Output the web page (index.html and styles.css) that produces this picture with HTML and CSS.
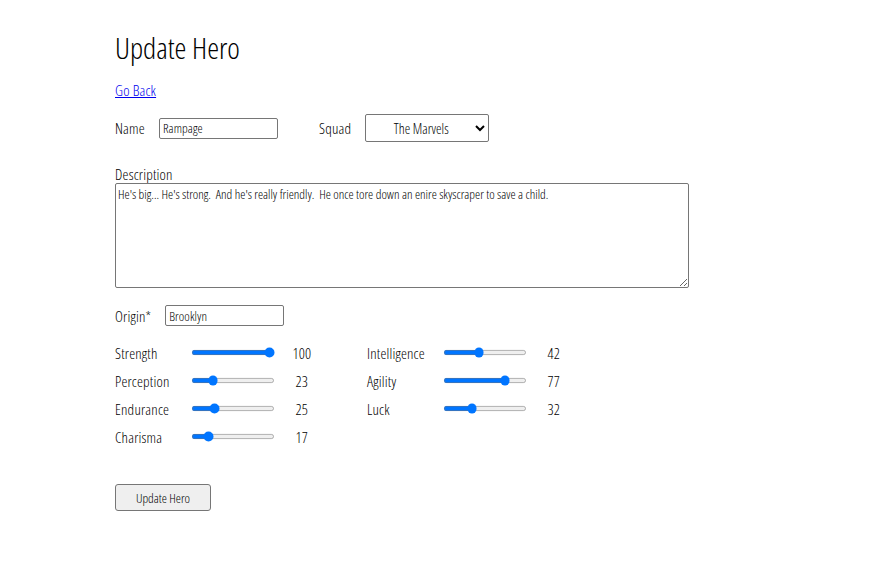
FILE: index.html
```html
<!DOCTYPE html>
<html>
<head>
<meta charset="utf-8">
<link rel="stylesheet" href="styles.css">
</head>
<body>
<div class="page">
  <h1 class="title">Update Hero</h1>
  <a class="back" href="#">Go Back</a>
  <div class="row top-row">
    <label class="lbl">Name</label>
    <input class="txt name-input" type="text" value="Rampage">
    <label class="lbl squad-lbl">Squad</label>
    <select class="squad"><option>The Marvels</option></select>
  </div>
  <div class="desc">
    <label class="lbl">Description</label>
    <textarea class="area">He's big... He's strong.  And he's really friendly.  He once tore down an enire skyscraper to save a child.</textarea>
  </div>
  <div class="row origin-row">
    <label class="lbl">Origin*</label>
    <input class="txt origin-input" type="text" value="Brooklyn">
  </div>
  <div class="stats">
    <div class="stat"><span class="slbl">Strength</span><input class="rng" type="range" min="0" max="100" value="100"><span class="sval">100</span></div>
    <div class="stat"><span class="slbl">Intelligence</span><input class="rng" type="range" min="0" max="100" value="42"><span class="sval">42</span></div>
    <div class="stat"><span class="slbl">Perception</span><input class="rng" type="range" min="0" max="100" value="23"><span class="sval">23</span></div>
    <div class="stat"><span class="slbl">Agility</span><input class="rng" type="range" min="0" max="100" value="77"><span class="sval">77</span></div>
    <div class="stat"><span class="slbl">Endurance</span><input class="rng" type="range" min="0" max="100" value="25"><span class="sval">25</span></div>
    <div class="stat"><span class="slbl">Luck</span><input class="rng" type="range" min="0" max="100" value="32"><span class="sval">32</span></div>
    <div class="stat"><span class="slbl">Charisma</span><input class="rng" type="range" min="0" max="100" value="17"><span class="sval">17</span></div>
  </div>
  <button class="btn" type="button">Update Hero</button>
</div>
</body>
</html>
```
FILE: styles.css
```css
html, body {
  margin: 0;
  padding: 0;
  background: #fff;
}
body {
  font-family: "Open Sans", "Liberation Sans", sans-serif;
  font-stretch: 75%;
  font-weight: 300;
  color: #000;
  font-size: 15px;
  letter-spacing: 0.2px;
}
.page {
  padding: 29px 0 0 115px;
  display: flex;
  flex-direction: column;
  align-items: flex-start;
}
.title {
  margin: 0;
  font-size: 30px;
  font-weight: 300;
  line-height: 38px;
  letter-spacing: 0;
  color: #000;
}
.back {
  margin-top: 13px;
  color: #0000ee;
  font-size: 15px;
  line-height: 20px;
}
.row {
  display: flex;
  align-items: center;
}
.top-row {
  margin-top: 14px;
  height: 28px;
}
.lbl {
  font-size: 15px;
  line-height: 18px;
}
.txt {
  font-family: inherit;
  font-stretch: 75%;
  font-weight: 300;
  font-size: 13px;
  letter-spacing: 0.1px;
  height: 21px;
  box-sizing: border-box;
  border: 1px solid #767676;
  border-radius: 2px;
  padding: 1px 3px;
  color: #000;
}
.name-input {
  margin-left: 14px;
  width: 119px;
}
.squad-lbl {
  margin-left: 41px;
}
.squad {
  margin-left: 14px;
  width: 124px;
  height: 28px;
  font-family: inherit;
  font-stretch: 75%;
  font-weight: 300;
  font-size: 14px;
  text-align: center;
  text-align-last: center;
  border: 1px solid #767676;
  border-radius: 2px;
  background: #fff;
  color: #000;
}
.desc {
  margin-top: 23px;
  display: flex;
  flex-direction: column;
}
.area {
  width: 574px;
  height: 105px;
  box-sizing: border-box;
  font-family: inherit;
  font-stretch: 75%;
  font-weight: 300;
  font-size: 13px;
  letter-spacing: 0;
  padding: 1px 2px;
  border: 1px solid #767676;
  border-radius: 2px;
  resize: both;
  color: #000;
}
.origin-row {
  margin-top: 17px;
}
.origin-input {
  margin-left: 14px;
  width: 119px;
}
.stats {
  margin-top: 17px;
  display: grid;
  grid-template-columns: 252px 200px;
  row-gap: 9px;
}
.stat {
  display: flex;
  align-items: center;
  height: 19px;
}
.slbl {
  flex: 0 0 76px;
  font-size: 15px;
}
.rng {
  zoom: 0.65;
  margin: 0;
  flex: 0 0 auto;
}
.sval {
  flex: 0 0 54px;
  text-align: center;
  font-size: 15px;
}
.btn {
  margin-top: 38px;
  width: 96px;
  height: 27px;
  font-family: inherit;
  font-stretch: 75%;
  font-weight: 300;
  font-size: 13px;
  background: #efefef;
  border: 1px solid #767676;
  border-radius: 3px;
  color: #000;
}
```
